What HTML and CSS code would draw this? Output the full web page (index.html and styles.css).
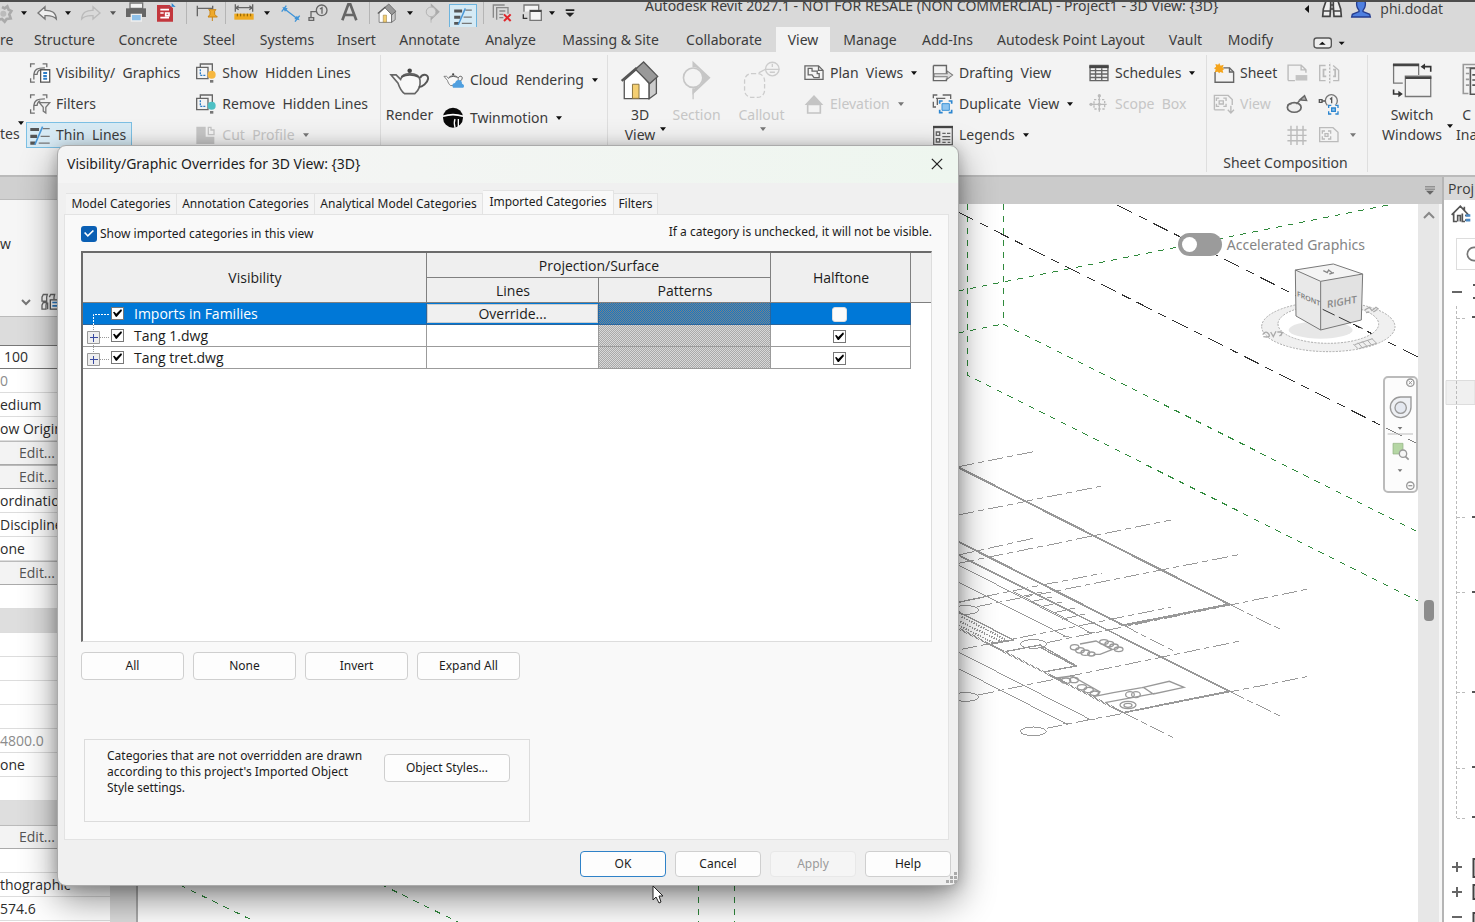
FILE: index.html
```html
<!DOCTYPE html>
<html lang="en">
<head>
<meta charset="utf-8">
<title>Autodesk Revit 2027.1 - Project1 - 3D View: {3D}</title>
<link rel="stylesheet" href="styles.css">
</head>
<body>
<svg class="defs" aria-hidden="true">
  <symbol id="caret" viewBox="0 0 8 5"><path d="M0 0h8L4 5z" fill="currentColor"/></symbol>
  <symbol id="thin" viewBox="86 370 68 60"><path d="M90 383h27M90 404h21M90 425h16" stroke="#555" stroke-width="10"/><path d="M128 380h22M122 404h28M116 425h34" stroke="#777" stroke-width="4"/><path d="M128 374l-24 56" stroke="#4a97d6" stroke-width="5"/></symbol>
  <symbol id="teapot" viewBox="1166 200 130 90"><path d="M1172 226h16l14 14c3-10 10-18 28-18 20 0 30 8 32 20 2 18-6 34-16 42h-32c-12-8-16-20-20-32z" fill="#f8f8f8" stroke="#666" stroke-width="5"/><path d="M1262 236c6-14 26-14 25 2-2 14-18 24-29 26M1204 232q26-12 54 0" fill="none" stroke="#555" stroke-width="6"/><circle cx="1230" cy="213" r="7" fill="#444"/></symbol>
  <symbol id="brackets" viewBox="0 0 68 68"><path d="M5 16V6h13M42 6h13v10M5 50v12h13M15 54V38c2-14 8-20 34-20M15 38h10q1-12 10-14" fill="none" stroke="#707070" stroke-width="4"/></symbol>
  <symbol id="home" viewBox="748 178 120 122"><path d="M760 240l38-34 38 44v46h-76z" fill="#fff" stroke="#555" stroke-width="4"/><path d="M836 250l22-20v50l-22 16z" fill="#ccc" stroke="#555" stroke-width="4"/><path d="M794 206l25-22 43 44-24 22z" fill="#999" stroke="#555" stroke-width="4"/><path d="M752 242l46-40" stroke="#555" stroke-width="7"/><path d="M785 252h20v43h-20z" fill="#f4cf72" stroke="#8b7440" stroke-width="3"/></symbol>
  <symbol id="sec" viewBox="920 178 120 124"><circle cx="968" cy="233" r="30" fill="none" stroke="currentColor" stroke-width="5"/><path d="M966 180l56 53-56 53v-20a33 33 0 0 0 0-66z" fill="currentColor"/><path d="M968 266v34" stroke="currentColor" stroke-width="4"/></symbol>
  <symbol id="windows" viewBox="630 186 126 112"><path d="M664 252h-29v-60h79v34M714 230h38v64h-80v-64z" fill="none" stroke="#777" stroke-width="4"/><path d="M633 195h82M672 235h82" stroke="#444" stroke-width="8"/><path d="M752 216v-16h-24M635 272v14h22" fill="none" stroke="#333" stroke-width="5"/><path d="M720 200l14-10v20zM664 286l-14-10v20z" fill="#333"/></symbol>
</svg>

<header class="titlebar">
  <nav class="quick" aria-label="Quick access">
    <button aria-label="Settings"><svg class="q14" viewBox="0 0 42 60"><path d="M6 12l8 4 8-6 4 10 8 4-6 10 4 12-12 2-6 8-8-8-10 2" fill="none" stroke="#aaa" stroke-width="8"/><circle cx="10" cy="32" r="9" fill="#bbb"/></svg></button>
    <button aria-label="More"><svg class="caret"><use href="#caret"/></svg></button>
    <button aria-label="Undo"><svg class="q20" viewBox="0 0 60 54"><path d="M3 27L24 8v11c18-1 33 6 34 26-8-9-18-11-34-10v10z" fill="#eee" stroke="#777" stroke-width="4"/></svg></button>
    <button aria-label="Undo list"><svg class="caret"><use href="#caret"/></svg></button>
    <button aria-label="Redo"><svg class="q20" viewBox="0 0 60 54"><path d="M57 27L36 8v11C18 18 3 25 2 45c8-9 18-11 34-10v10z" fill="none" stroke="#bbb" stroke-width="4"/></svg></button>
    <button aria-label="Redo list"><svg class="caret grey"><use href="#caret"/></svg></button>
    <button aria-label="Print"><svg class="q20" viewBox="0 0 60 60"><path d="M12 0h38v16H12z" fill="#f4f4f4" stroke="#777" stroke-width="4"/><path d="M0 16h60v26H0z" fill="#666"/><path d="M16 34h30v20H16z" fill="#8fc1ea" stroke="#eee" stroke-width="4"/></svg></button>
    <button aria-label="Export PDF"><svg class="q20" viewBox="0 0 60 60"><path d="M6 6h38l10 10v40H6z" fill="#c3373d"/><path d="M16 20h26M16 30h10M16 44h26M32 30v8h10v-8z" stroke="#fff" stroke-width="5" fill="none"/><path d="M34 10h16V0l12 12" fill="#2d86d0"/></svg></button>
    <i class="sep"></i>
    <button aria-label="Activate dimensions"><svg class="q20" viewBox="0 0 60 60"><path d="M4 8v32M4 16h46v-8" fill="none" stroke="#666" stroke-width="4"/><path d="M38 20h22l-4 4v10l8 8H36l6-8V24zM49 42v12" fill="#efaa2c" stroke="#c98516" stroke-width="3"/></svg></button>
    <i class="sep"></i>
    <button aria-label="Measure"><svg class="q20" viewBox="0 0 60 60"><path d="M4 4v22M56 4v22M4 14h52M14 8L6 14l8 6M46 8l8 6-8 6" fill="none" stroke="#666" stroke-width="4"/><path d="M1 32h58v18H1z" fill="#efaa20"/><path d="M10 32v8M20 32v8M30 32v8M40 32v8M50 32v8" stroke="#875c00" stroke-width="3"/></svg></button>
    <button aria-label="Measure list"><svg class="caret"><use href="#caret"/></svg></button>
    <button aria-label="Aligned dimension"><svg class="q20" viewBox="0 0 60 60"><path d="M8 16l42 32M2 26L16 8M42 56l14-18" fill="none" stroke="#3f94d8" stroke-width="4"/><path d="M4 12l16 4-8 10zM56 52l-16-4 8-10z" fill="#3f94d8"/></svg></button>
    <button aria-label="Tag"><svg class="q20" viewBox="0 0 60 60"><circle cx="38" cy="22" r="16" fill="none" stroke="#666" stroke-width="4"/><path d="M33 18l6-4v18M22 26H6v20M0 44h14v8H0z" fill="none" stroke="#666" stroke-width="4"/></svg></button>
    <button aria-label="Text"><svg class="q20" viewBox="0 0 60 60"><path d="M10 52L28 4h6l18 48M17 36h28" fill="none" stroke="#666" stroke-width="8"/></svg></button>
    <i class="sep"></i>
    <button aria-label="Default 3D view"><svg class="q20"><use href="#home"/></svg></button>
    <button aria-label="3D list"><svg class="caret"><use href="#caret"/></svg></button>
    <button aria-label="Section" class="light"><svg class="q20"><use href="#sec"/></svg></button>
    <button aria-label="Thin lines" class="lit"><svg class="q20"><use href="#thin"/></svg></button>
    <i class="sep"></i>
    <button aria-label="Close inactive"><svg class="q20" viewBox="0 0 60 60"><path d="M4 44V6h34M14 50V14h34v18M22 24h18M22 34h12M22 44h12" fill="none" stroke="#888" stroke-width="4"/><path d="M36 34l20 20M56 34L36 54" stroke="#e0262b" stroke-width="6"/></svg></button>
    <button aria-label="Switch windows"><svg class="q20" viewBox="0 0 60 60"><path d="M6 26V6h44v16M24 22h34v30H24z" fill="#f4f4f4" stroke="#777" stroke-width="4"/><path d="M24 24h34" stroke="#444" stroke-width="6"/><path d="M4 34v12h12" fill="none" stroke="#333" stroke-width="4"/></svg></button>
    <button aria-label="Switch list"><svg class="caret"><use href="#caret"/></svg></button>
    <button aria-label="Customize"><svg class="q10" viewBox="0 0 30 30"><path d="M2 4h26v5H2zM2 14h26L15 27z" fill="#222"/></svg></button>
  </nav>
  <h1>Autodesk Revit 2027.1 - NOT FOR RESALE (NON COMMERCIAL) - Project1 - 3D View: {3D}</h1>
  <div class="account">
    <svg class="q10" viewBox="0 0 30 30"><path d="M5 15L18 3v24z" fill="#111"/></svg>
    <svg class="q20" viewBox="0 0 60 60"><path d="M12 6h14v16l-2 30H2l2-22zM34 6h14l8 24 2 22H36l-2-30zM26 18h8v12h-8zM4 36h20M36 36h20" fill="#eee" stroke="#444" stroke-width="5"/></svg>
    <svg class="q20" viewBox="0 0 60 60"><path d="M20 4h20q6 8 1 22l-5 8v4l20 8 2 8H2l2-8 20-8v-4l-5-8Q14 12 20 4z" fill="#4e7fe0" stroke="#253c8e" stroke-width="4"/></svg>
    <a href="#">phi.dodat</a>
  </div>
</header>

<nav class="tabs" aria-label="Ribbon tabs">
  <a href="#" class="first">re</a><a href="#">Structure</a><a href="#">Concrete</a><a href="#">Steel</a><a href="#">Systems</a><a href="#">Insert</a><a href="#">Annotate</a><a href="#">Analyze</a><a href="#">Massing &amp; Site</a><a href="#">Collaborate</a><a href="#" class="on">View</a><a href="#">Manage</a><a href="#">Add-Ins</a><a href="#">Autodesk Point Layout</a><a href="#">Vault</a><a href="#">Modify</a>
  <button class="collapse" aria-label="Minimize ribbon"><svg viewBox="0 0 96 36"><rect x="3" y="3" width="52" height="30" rx="8" fill="#eee" stroke="#555" stroke-width="4"/><path d="M18 23h20l-10-9z" fill="#111"/><path d="M77 14h18l-9 10z" fill="#111"/></svg></button>
</nav>

<section class="ribbon" aria-label="View ribbon">
  <div class="panel p1">
    <div class="cut"><svg class="caret"><use href="#caret"/></svg><span>tes</span></div>
    <div class="rows">
      <button><svg class="ic" viewBox="0 0 68 68"><use href="#brackets" width="68" height="68"/><path d="M36 24h28v38H36z" fill="#fff" stroke="#555" stroke-width="4"/><path d="M44 34h12M44 52h12M47 46v-3h8" stroke="#2d7dc8" stroke-width="6"/></svg>Visibility/&nbsp; Graphics</button>
      <button><svg class="ic" viewBox="0 0 68 68"><use href="#brackets" width="68" height="68"/><path d="M32 30h32L52 44v18l-8-6V44z" fill="#eee" stroke="#777" stroke-width="4"/></svg>Filters</button>
      <button class="lit"><svg class="ic"><use href="#thin"/></svg>Thin&nbsp; Lines</button>
    </div>
    <div class="rows">
      <button><svg class="ic" viewBox="582 182 66 66"><path d="M598 198v-10h36v24M587 198h34v34h-34zM634 224h-12" fill="none" stroke="#666" stroke-width="4"/><path d="M598 204v18h18" fill="none" stroke="#2d7dc8" stroke-width="4" stroke-dasharray="6 3"/><circle cx="632" cy="220" r="12" fill="#f6b73f"/><path d="M627 236h10v8h-10z" fill="#777"/></svg>Show&nbsp; Hidden Lines</button>
      <button><svg class="ic" viewBox="582 182 66 66"><path d="M598 198v-10h36v24M587 198h34v34h-34zM634 224h-12" fill="none" stroke="#666" stroke-width="4"/><path d="M598 204v18h18" fill="none" stroke="#2d7dc8" stroke-width="4" stroke-dasharray="6 3"/><circle cx="632" cy="220" r="12" fill="#4dc0c4"/><path d="M627 236h10v8h-10z" fill="#777"/></svg>Remove&nbsp; Hidden Lines</button>
      <button disabled><svg class="ic" viewBox="584 368 66 62"><path d="M588 374h28v30h26v22h-54z" fill="#c6c6c6"/><path d="M624 376h8v8h9v14h-17z" fill="none" stroke="#c6c6c6" stroke-width="4"/></svg>Cut&nbsp; Profile <svg class="caret dim"><use href="#caret"/></svg></button>
    </div>
  </div>

  <div class="panel p2">
    <button class="big"><svg class="pot"><use href="#teapot"/></svg><span>Render</span></button>
    <div class="rows tall">
      <button><svg class="ic" viewBox="0 0 66 66"><use href="#teapot" y="8" width="62" height="46"/><path d="M30 56q-6-12 6-14 4-12 16-8 6 4 5 10 10 4 4 12z" fill="#4f9fdf"/></svg>Cloud&nbsp; Rendering <svg class="caret"><use href="#caret"/></svg></button>
      <button><svg class="ic" viewBox="0 0 66 66"><circle cx="30" cy="32" r="30" fill="#0a0a0a"/><path d="M0 28q30-10 60 0" fill="none" stroke="#fff" stroke-width="5"/><path d="M36 62q-4-16 0-26M46 36v24" fill="none" stroke="#fff" stroke-width="4"/></svg>Twinmotion <svg class="caret"><use href="#caret"/></svg></button>
    </div>
  </div>

  <div class="panel p3">
    <button class="big wide"><svg class="icon40"><use href="#home"/></svg><span>3D<br>View</span><svg class="caret corner"><use href="#caret"/></svg></button>
    <button class="big" disabled><svg class="icon40"><use href="#sec"/></svg><span>Section</span></button>
    <button class="big" disabled><svg class="icon40" viewBox="1116 178 124 124"><rect x="1124" y="220" width="62" height="74" rx="22" fill="none" stroke="#ccc" stroke-width="4" stroke-dasharray="14 7"/><circle cx="1210" cy="206" r="21" fill="none" stroke="#ccc" stroke-width="4"/><path d="M1168 218l20-11h44M1210 190v10M1202 216h16" fill="none" stroke="#ccc" stroke-width="4"/></svg><span>Callout</span><svg class="caret dim"><use href="#caret"/></svg></button>
    <div class="rows plan">
      <button><svg class="ic" viewBox="38 184 68 60"><path d="M44 192h42l14 14v28H44z" fill="none" stroke="#666" stroke-width="4"/><path d="M86 192v14h14M54 200h12v8h16v8h6v12H72l-6-8H54z" fill="none" stroke="#666" stroke-width="4"/></svg>Plan&nbsp; Views <svg class="caret"><use href="#caret"/></svg></button>
      <button disabled><svg class="ic" viewBox="40 276 64 66"><path d="M44 312l28-30 28 30z" fill="#c4c4c4"/><path d="M53 310h38v26H53z" fill="#f3f3f3" stroke="#c4c4c4" stroke-width="5"/></svg>Elevation <svg class="caret dim"><use href="#caret"/></svg></button>
    </div>
    <div class="rows draft">
      <button><svg class="ic" viewBox="424 184 64 60"><path d="M428 192h38v24M466 230v6h-38v-44" fill="none" stroke="#666" stroke-width="4"/><path d="M430 216h38v-8l16 12-16 12v-7h-38z" fill="#ddd" stroke="#777" stroke-width="3"/></svg>Drafting&nbsp; View</button>
      <button><svg class="ic" viewBox="424 274 66 66"><path d="M428 290v-10h12M456 280h24v12M436 316h-8v-16M440 288v22M436 290h28" fill="none" stroke="#666" stroke-width="4"/><path d="M454 306h22v20h-22z" fill="#8ec5f0" stroke="#3d93d6" stroke-width="3"/><path d="M447 306v-8h9M474 298h9v8M483 324v9h-9M456 333h-9v-9" fill="none" stroke="#2d86d0" stroke-width="5"/></svg>Duplicate&nbsp; View <svg class="caret"><use href="#caret"/></svg></button>
      <button><svg class="ic" viewBox="424 366 64 66"><path d="M428 374h56v54h-56z" fill="#eee" stroke="#666" stroke-width="4"/><path d="M426 375h60" stroke="#444" stroke-width="7"/><path d="M436 390h10v10h-10zM436 410h10v10h-10zM454 394h10M468 394h10M454 404h24M454 413h24M454 421h10M470 421h8" fill="none" stroke="#666" stroke-width="4"/></svg>Legends <svg class="caret"><use href="#caret"/></svg></button>
    </div>
    <div class="rows sched">
      <button><svg class="ic" viewBox="890 184 64 60"><path d="M896 192h52v44h-52zM896 207h52M896 217h52M896 227h52M912 200v36M930 200v36" fill="none" stroke="#666" stroke-width="4"/><path d="M894 196h56" stroke="#444" stroke-width="8"/></svg>Schedules <svg class="caret"><use href="#caret"/></svg></button>
      <button disabled><svg class="ic" viewBox="890 276 66 66"><path d="M900 310h46M924 286v46" stroke="#bbb" stroke-width="4"/><path d="M908 296h32v28h-32z" fill="none" stroke="#bbb" stroke-width="4" stroke-dasharray="7 5"/><circle cx="924" cy="284" r="5" fill="#bbb"/><circle cx="899" cy="310" r="5" fill="#bbb"/><circle cx="924" cy="310" r="5" fill="#bbb"/></svg>Scope&nbsp; Box</button>
    </div>
  </div>

  <div class="panel p4">
    <div class="sheet">
      <div class="rows">
        <button><svg class="ic" viewBox="98 186 64 62"><path d="M104 214v30h54v-30l-12-12h-18" fill="none" stroke="#666" stroke-width="4"/><path d="M146 202v12h12" fill="none" stroke="#666" stroke-width="4"/><path d="M116 188l4 8 9-3-3 9 5 3-5 4 2 8-9-3-3 4-4-5-9 2 3-8-5-4 6-4-2-8 8 2z" fill="#f5a51c"/></svg>Sheet</button>
        <button disabled><svg class="ic" viewBox="98 276 64 62"><path d="M102 324v-42h40l12 12v16M102 324h30" fill="none" stroke="#bbb" stroke-width="4"/><path d="M108 298v-8h8M128 290h8v8M136 306v8h-8M116 314h-8v-8M116 298h12v9h-12zM150 312v20M141 324l9 9 9-9" fill="none" stroke="#bbb" stroke-width="4"/></svg>View</button>
      </div>
      <div class="mini">
        <button disabled aria-label="Title block"><svg class="ic" viewBox="322 186 64 60"><path d="M328 238v-45h38l14 14v8M328 238h20M366 193v14h14" fill="none" stroke="#bbb" stroke-width="4"/><path d="M350 222h34v16h-34z" fill="#c4c4c4"/></svg></button>
        <button disabled aria-label="Matchline"><svg class="ic" viewBox="418 184 64 64"><path d="M440 194h-17v44h17M462 194l16 14v30h-16M452 186v60" fill="none" stroke="#bbb" stroke-width="4"/><path d="M452 186v60" stroke="#f3f3f3" stroke-width="5" stroke-dasharray="4 6"/><path d="M442 206h-8v20h8M462 206h6v20h-6" fill="none" stroke="#bbb" stroke-width="5"/></svg></button><i></i>
        <button aria-label="Revisions"><svg class="ic" viewBox="322 276 64 64"><ellipse cx="346" cy="318" rx="20" ry="14" fill="#eee" stroke="#666" stroke-width="5"/><path d="M326 312q6-6 12-4M352 308l16-16M362 296l14-12 6 14z" fill="#aaa" stroke="#666" stroke-width="4"/></svg></button>
        <button aria-label="Guide"><svg class="ic" viewBox="418 276 66 64"><circle cx="458" cy="298" r="18" fill="none" stroke="#777" stroke-width="4"/><path d="M454 294l5-4v16M440 299h-12M422 295h8v8h-8z" fill="none" stroke="#555" stroke-width="4"/><path d="M446 310h36v30h-36z" fill="#f3f3f3"/><path d="M450 320v-8h8M470 312h8v8M478 330v8h-8M458 338h-8v-8" fill="none" stroke="#2d86d0" stroke-width="4"/><path d="M459 320h11v10h-11z" fill="#8ec5f0" stroke="#2d86d0" stroke-width="4"/></svg></button><i></i>
        <button disabled aria-label="Guide grid"><svg class="ic" viewBox="322 370 62 60"><path d="M336 374v54M353 374v54M370 374v54M326 386h54M326 401h54M326 416h54" stroke="#bbb" stroke-width="4"/></svg></button>
        <button disabled aria-label="Viewports"><svg class="ic" viewBox="418 370 66 60"><path d="M423 378h40l15 14v28h-55z" fill="none" stroke="#bbb" stroke-width="4"/><path d="M431 396v-8h8M448 388h8v8M456 404v8h-8M439 412h-8v-8M439 396h9v8h-9z" fill="none" stroke="#bbb" stroke-width="4"/></svg></button>
        <svg class="caret dim"><use href="#caret"/></svg>
      </div>
    </div>
    <div class="plabel">Sheet Composition</div>
  </div>

  <div class="panel p5">
    <button class="big"><svg class="icon40"><use href="#windows"/></svg><span>Switch<br>Windows</span><svg class="caret corner"><use href="#caret"/></svg></button>
    <button class="big edge"><svg class="icon40" viewBox="848 186 124 112"><path d="M868 284h-16v-90h50M860 204h30M860 222h10M860 240h10M860 258h10" fill="none" stroke="#999" stroke-width="5"/><path d="M874 206h90v80h-90zM880 226h16M880 242h16M880 258h16" fill="none" stroke="#555" stroke-width="5"/></svg><span>C<br>Ina</span></button>
  </div>
</section>

<main class="work">
  <aside class="props" aria-label="Properties">
    <div class="phead"></div>
    <div class="ptype"><span>w</span><div class="pick"><svg class="chev" viewBox="0 0 10 6"><path d="M1 1l4 4 4-4" fill="none" stroke="#777" stroke-width="2"/></svg><svg class="etype" viewBox="0 0 60 50"><path d="M3 12l4-8h12l-2 8v12H3zM25 12l4-8h12l-2 8v6M3 36l4-8h10l-2 8v12H3zM20 48v-20" fill="none" stroke="#666" stroke-width="4"/><path d="M28 20h26v28H28z" fill="#fff" stroke="#555" stroke-width="4"/><path d="M34 28h14M34 38h14" stroke="#2d7dc8" stroke-width="5"/></svg></div></div>
    <div class="pband"></div>
    <div class="pscroll">
    <ul class="plist">
      <li class="scale">100</li><li class="faint">0</li><li>edium</li><li>ow Origin</li><li class="edit"><button>Edit...</button></li><li class="edit"><button>Edit...</button></li><li>ordination</li><li>Discipline</li><li>one</li><li class="edit"><button>Edit...</button></li><li></li><li class="cat"></li><li></li><li></li><li></li><li></li><li class="faint">4800.0</li><li>one</li><li></li><li class="cat"></li><li class="edit"><button>Edit...</button></li><li></li><li>thographic</li><li>574.6</li>
    </ul><div class="pbar"></div></div>
  </aside>

  <section class="doc" aria-label="3D view">
    <div class="dochead"><svg viewBox="0 0 30 26"><path d="M0 2h30M0 9h30" stroke="#777" stroke-width="3"/><path d="M3 14h24L15 26z" fill="#666"/></svg></div>
    <div class="canvas">
      <svg class="scene" viewBox="138 204 1280 718" preserveAspectRatio="xMinYMin slice" shape-rendering="crispEdges">
        <g fill="none" stroke="#2f8a3c" stroke-width="1" stroke-dasharray="6 6">
          <path d="M967 204v171l451 226M1003 204v120l415 208M958 291l115-23 315-63M958 333l45-9M180 885l82 40M370 879l92 45M698 885v37M734 885v37"/>
        </g>
        <path d="M1117 205l301 152M958 212l460 232" fill="none" stroke="#333" stroke-dasharray="17 7 9 7"/>
        <g transform="translate(950 440) scale(.3333)" fill="none" stroke="#999" stroke-width="3">
          <path stroke-width="6" d="M25 82L838 493L520 556L25 305"/>
          <path stroke-width="5" d="M25 345L838 754L520 818"/>
          <path stroke-width="6" stroke-dasharray="3 1" d="M25 565L520 818"/>
          <path stroke-dasharray="48 12 18 12" d="M25 80L250 35M25 225L455 138M25 370L662 240M25 345L250 295M80 500L866 344M100 470L455 400M290 608L1070 448M35 628L662 502M85 765L866 604M290 865L1070 710M838 493L995 570M520 556L675 635M838 754L995 830M520 818L675 896"/>
          <path d="M25 375L420 577M25 426L350 590M25 636L420 838M25 686L350 852M340 590h18M410 577h25M340 852h18M410 838h25"/>
          <path d="M25 487l95-20M25 515L190 600L110 615M165 635L270 615L380 678L285 695M270 622l110 58" stroke-width="4"/>
          <path d="M35 530l130 68M30 545l125 60M25 556l110 54" stroke-width="6" stroke-dasharray="4 4"/>
          <ellipse cx="250" cy="612" rx="39" ry="13"/><ellipse cx="250" cy="874" rx="39" ry="13"/><ellipse cx="46" cy="771" rx="39" ry="13"/><ellipse cx="46" cy="510" rx="39" ry="13"/>
          <g shape-rendering="auto" stroke-width="4">
            <path d="M390 612l48-9 48 26-36 14h-20"/>
            <ellipse cx="374" cy="622" rx="13" ry="8"/><ellipse cx="390" cy="631" rx="13" ry="8"/><ellipse cx="406" cy="638" rx="13" ry="8"/><ellipse cx="424" cy="642" rx="11" ry="6"/>
            <ellipse cx="462" cy="606" rx="13" ry="7"/><ellipse cx="478" cy="612" rx="13" ry="8"/><ellipse cx="492" cy="620" rx="13" ry="8"/><ellipse cx="506" cy="628" rx="13" ry="7"/>
            <path d="M580 742l78-18 44 18-92 20zM465 788l150-28M430 770l60-12 90-16"/>
            <path d="M320 714l45-6 85 48-10 10"/>
            <ellipse cx="348" cy="722" rx="14" ry="8"/><ellipse cx="372" cy="720" rx="13" ry="8"/><ellipse cx="396" cy="742" rx="14" ry="8"/><ellipse cx="416" cy="750" rx="14" ry="8"/><ellipse cx="434" cy="760" rx="13" ry="7"/>
            <ellipse cx="534" cy="795" rx="24" ry="11"/><ellipse cx="534" cy="796" rx="12" ry="6"/><ellipse cx="540" cy="764" rx="13" ry="9"/><ellipse cx="558" cy="764" rx="13" ry="9"/>
          </g>
          <path d="M190 455L355 540M215 470l60-14M245 485l60-14M275 500l60-14M305 520l70-16M335 538l70-16" stroke-width="3"/>
        </g>
        <g transform="translate(1160 200) scale(.3333)" shape-rendering="auto">
          <ellipse cx="482" cy="390" rx="96" ry="26" fill="#ddd" opacity=".7"/>
          <path fill-rule="evenodd" d="M305 380a200 75 0 1 0 400 0a200 75 0 1 0-400 0zM354 372a151 58 0 1 0 302 0a151 58 0 1 0-302 0z" fill="#f0f0f0" stroke="#aaa" stroke-width="3" stroke-dasharray="6 4"/>
          <path d="M406 210l114-18 88 30-126 22z" fill="#f4f4f4"/><path d="M406 210l76 34v146l-74-42z" fill="#e9e9e9"/><path d="M482 244l126-22-4 138-122 30z" fill="#e2e2e2"/>
          <path d="M406 210l114-18 88 30-126 22zl2 138 74 42V244M482 390l122-30 4-138" fill="none" stroke="#777" stroke-width="3"/>
          <path d="M490 212l12 6 4-8 10 8M508 222l14-4" fill="none" stroke="#888" stroke-width="4"/>
          <path d="M488 328l120 58" fill="none" stroke="#333" stroke-width="3" stroke-dasharray="40 14"/>
          <path d="M308 404q10-14 18-2t-16 8M332 396l8 14 8-16M352 396h10q8 6-4 12M368 396l-6 12M614 330l14-8 8 10 12-10 8 6M618 338l10-2M640 336l10-6" fill="none" stroke="#aaa" stroke-width="4"/>
          <path d="M580 432l14 14M594 428l12 14M606 424l14 14M622 420l12 14M636 416l14 14M584 434l54-18M596 446l54-16" fill="none" stroke="#aaa" stroke-width="3"/>
        </g>
        <text class="cube" transform="translate(1327 308) skewY(-10)">RIGHT</text>
        <text class="cube sm" transform="translate(1297 296) skewY(24)">FRONT</text>
      </svg>
      <label class="accel"><input type="checkbox" role="switch">Accelerated Graphics</label>
      <div class="navbar">
        <svg viewBox="0 0 105 351"><circle cx="82" cy="20" r="11" fill="none" stroke="#999" stroke-width="4"/><path d="M77 15l10 10M87 15L77 25" stroke="#999" stroke-width="3"/><path d="M22 94a31 31 0 0 1 31-31h31v31a31 31 0 0 1-62 0z" fill="#eef0f4" stroke="#999" stroke-width="4"/><circle cx="53" cy="95" r="17" fill="#e4e8f0" stroke="#999" stroke-width="4"/><path d="M44 153h14l-7 8zM44 280h14l-7 8z" fill="#777"/><path d="M14 174h76" stroke="#bbb" stroke-width="3"/><path d="M30 202h30v32H30z" fill="#b5d6a4" stroke="#8fb080" stroke-width="2"/><circle cx="60" cy="233" r="11" fill="#f6f6f6" stroke="#999" stroke-width="4"/><path d="M67 241l10 10" stroke="#999" stroke-width="5"/><circle cx="82" cy="329" r="11" fill="none" stroke="#999" stroke-width="4"/><path d="M76 329h12" stroke="#999" stroke-width="4"/></svg>
      </div>
      <div class="vbar"><svg viewBox="0 0 14 8"><path d="M2 7l5-5 5 5" fill="none" stroke="#888" stroke-width="2"/></svg><div class="thumb"></div></div>
    </div>
  </section>

  <aside class="browser" aria-label="Project browser">
    <div class="bhead">Proj</div>
    <svg class="bhome" viewBox="0 0 60 56"><path d="M2 32L28 6l26 28M8 28v24h10M40 8v10M20 52V34h8v18M34 28v24h8M42 34h10M42 48h10" fill="none" stroke="#555" stroke-width="5"/><path d="M44 30h14v8H44zM44 44h14v8H44z" fill="#4c89c4"/></svg>
    <div class="bsearch"><svg viewBox="0 0 48 48"><circle cx="24" cy="24" r="20" fill="none" stroke="#777" stroke-width="5"/></svg></div>
    <svg class="tree" viewBox="1444 275 31 647" preserveAspectRatio="xMinYMin slice"><path d="M1446 380.500h29v24h-29z" fill="#f0f0f0" stroke="#ddd"/><path d="M1456.500 306v512M1457 318.500h10M1457 517.500h10M1457 592.500h10M1457 692.500h10M1457 768.500h10M1457 818.500h10" fill="none" stroke="#bbb" stroke-dasharray="3 2"/><path d="M1452 292h10M1452 867h10M1457 862v10M1452 892h10M1457 887v10M1452 917h10" stroke="#666" stroke-width="2"/><path d="M1472 317h3M1472 517h3M1472 592h3M1472 692h3M1472 767h3M1472 817h3M1473 285h2M1473 298h2" stroke="#555" stroke-width="2"/><path d="M1475 859h-1.500v18h1.500M1475 885h-1.500v14h1.500M1475 913h-1.500v9" fill="none" stroke="#444" stroke-width="2"/></svg>
  </aside>
</main>

<div class="dialog" role="dialog" aria-labelledby="dt">
  <div class="dtitle"><h2 id="dt">Visibility/Graphic Overrides for 3D View: {3D}</h2><button aria-label="Close"><svg viewBox="0 0 14 14"><path d="M1 1l12 12M13 1L1 13" stroke="#222" stroke-width="1.500"/></svg></button></div>
  <div class="dtabs" role="tablist"><button role="tab">Model Categories</button><button role="tab">Annotation Categories</button><button role="tab">Analytical Model Categories</button><button role="tab" class="on" aria-selected="true">Imported Categories</button><button role="tab">Filters</button></div>
  <div class="page">
    <div class="showrow"><label><input type="checkbox" class="blue" checked>Show imported categories in this view</label><p>If a category is unchecked, it will not be visible.</p></div>
    <div class="grid">
      <table>
        <colgroup><col class="c1"><col class="c2"><col class="c3"><col class="c4"><col></colgroup>
        <thead>
          <tr><th rowspan="2">Visibility</th><th colspan="2">Projection/Surface</th><th rowspan="2">Halftone</th><th rowspan="2" class="stub"></th></tr>
          <tr><th>Lines</th><th>Patterns</th></tr>
        </thead>
        <tbody>
          <tr class="sel"><td><div class="name"><svg viewBox="0 0 28 22"><path d="M10.500 22V11.500H26" fill="none" stroke="#fff" stroke-dasharray="2 1"/></svg><input type="checkbox" id="r1" class="tick" checked><label for="r1">Imports in Families</label></div></td><td class="ov"><button>Override...</button></td><td class="hatch"></td><td class="mid"><input type="checkbox" class="soft" aria-label="Halftone imports"></td><td class="stub"></td></tr>
          <tr><td><div class="name"><svg viewBox="0 0 28 22"><path d="M10.500 0v22M17 12.500h9" stroke="#999" stroke-dasharray="1 1"/><path d="M4.500 6.500h12v12h-12z" fill="#eee" stroke="#999"/><path d="M7 12.500h8M10.500 9v8" stroke="#3a4aa0"/></svg><input type="checkbox" id="r2" class="tick" checked><label for="r2">Tang 1.dwg</label></div></td><td></td><td class="hatch"></td><td class="mid"><input type="checkbox" class="tick" checked aria-label="Halftone Tang 1.dwg"></td><td class="stub"></td></tr>
          <tr><td><div class="name"><svg viewBox="0 0 28 22"><path d="M10.500 0v7M17 12.500h9" stroke="#999" stroke-dasharray="1 1"/><path d="M4.500 6.500h12v12h-12z" fill="#eee" stroke="#999"/><path d="M7 12.500h8M10.500 9v8" stroke="#3a4aa0"/></svg><input type="checkbox" id="r3" class="tick" checked><label for="r3">Tang tret.dwg</label></div></td><td></td><td class="hatch"></td><td class="mid"><input type="checkbox" class="tick" checked aria-label="Halftone Tang tret.dwg"></td><td class="stub"></td></tr>
        </tbody>
      </table>
    </div>
    <div class="acts"><button class="btn">All</button><button class="btn">None</button><button class="btn">Invert</button><button class="btn">Expand All</button></div>
    <div class="note"><p>Categories that are not overridden are drawn according to this project's Imported Object Style settings.</p><button class="btn">Object Styles...</button></div>
  </div>
  <div class="foot"><button class="btn ok">OK</button><button class="btn">Cancel</button><button class="btn" disabled>Apply</button><button class="btn">Help</button></div>
  <svg class="grip" viewBox="0 0 12 12"><path d="M8 0h3v3H8zM4 4h3v3H4zM8 4h3v3H8zM0 8h3v3H0zM4 8h3v3H4zM8 8h3v3H8z" fill="#aaa"/></svg>
</div>
<svg class="cursor" viewBox="0 0 12 19"><path d="M1 1v14l3-3 3 6 2-1-2-6h4z" fill="#fff" stroke="#222"/></svg>
</body>
</html>
```
FILE: styles.css
```css
* { box-sizing: border-box; }
html, body { height: 100%; }
body {
  margin: 0;
  display: flex;
  flex-direction: column;
  overflow: hidden;
  position: relative;
  background: #f3f3f3;
  color: #3c3c3c;
  font: 14px/18px "Noto Sans", "Open Sans", sans-serif;
}
button { font: inherit; color: inherit; background: none; border: 0; padding: 0; margin: 0; white-space: nowrap; }
a { color: inherit; text-decoration: none; }
svg { display: block; flex: none; overflow: visible; }
.defs { position: absolute; width: 0; height: 0; overflow: hidden; }
.caret { width: 6px; height: 4px; color: #111; }
.caret.grey { color: #555; }
.caret.dim { color: #777; }

/* title bar */
.titlebar {
  flex: none;
  display: flex;
  align-items: flex-start;
  height: 27px;
  border-top: 2px solid #4d4d4d;
  background: #d9d9d9;
  overflow: hidden;
}
.quick {
  display: grid;
  grid-template-columns: 14px 20px 26px 16px 30px 14px 32px 26px 16px 24px 14px 24px 22px 26px 30px 30px 10px 26px 20px 26px 34px 6px 32px 28px 12px 24px;
  height: 14px;
  align-items: center;
  justify-items: center;
  flex: none;
}
.quick button { display: flex; align-items: center; justify-content: center; height: 14px; }
.quick .lit { width: 28px; height: 24px; align-self: end; margin-bottom: -4px; border: 1px solid #6db4de; background: #d5eaf5; }
.quick .light { color: #aaa; }
.q20 { width: 20px; height: 20px; }
.q14 { width: 14px; height: 20px; }
.q10 { width: 10px; height: 10px; }
.sep { width: 1px; height: 22px; background: #b5b5b5; }
.titlebar h1 { margin: 0 0 0 63px; font-size: 14px; font-weight: 400; line-height: 8px; white-space: nowrap; flex: 1; }
.account { display: flex; align-items: center; height: 14px; gap: 9px; padding-right: 32px; font-family: "Open Sans", sans-serif; }

/* ribbon tabs */
.tabs {
  flex: none;
  display: grid;
  grid-template-columns: 23px 83px 84px 58px 78px 61px 85px 77px 123px 104px 54px 80px 75px 172px 57px 73px auto;
  height: 25px;
  background: #d9d9d9;
}
.tabs a { text-align: center; line-height: 25px; white-space: nowrap; }
.tabs .first { text-align: left; }
.tabs .on { background: #f3f3f3; }
.collapse { padding: 7px 0 0 26px; text-align: left; }
.collapse svg { width: 32px; height: 12px; }

/* ribbon */
.ribbon {
  flex: none;
  display: flex;
  height: 125px;
  padding: 3px 0;
  border-bottom: 2px solid #bababa;
  overflow: hidden;
  background: #f3f3f3;
}
.panel { flex: none; display: flex; border-right: 1px solid #dedede; }
.p1 { width: 381px; }
.p2 { width: 227px; }
.p3 { width: 599px; }
.p4 { width: 161px; flex-direction: column; }
.p5 { flex: 1 1 auto; border: 0; }
.ribbon button { display: flex; align-items: center; gap: 5px; }
.ribbon button:disabled { color: #c6c6c6; }
.ic { width: 22px; height: 22px; }
.ribbon button .caret:last-child { margin-left: 3px; }
.cut { width: 26px; display: flex; flex-direction: column; padding-top: 66px; }
.cut .caret { align-self: flex-end; margin-right: 2px; }
.rows { display: grid; grid-template-rows: repeat(3, 31px); align-items: center; justify-items: start; padding-top: 2px; align-content: start; }
.rows button { height: 26px; }
.p1 .rows button { border: 1px solid transparent; padding: 0 5px 0 2px; }
.p1 .rows .lit { border-color: #7cc0e4; background: #d8ebf5; }
.p1 .rows + .rows { padding-left: 6px; }
.rows.tall { grid-template-rows: 38px 38px; padding-top: 6px; padding-left: 5px; }
.ribbon .big { flex-direction: column; gap: 0; position: relative; align-self: flex-start; padding-top: 5px; width: 65px; }
.big span { line-height: 20px; margin-top: 5px; }
.ribbon .big .caret { margin: 2px 0 0; }
.ribbon .big .corner { position: absolute; right: 6px; bottom: 14px; }
.icon40 { width: 40px; height: 40px; }
.p2 .big { width: 57px; padding-top: 11px; }
.pot { width: 42px; height: 30px; }
.p2 .big span { margin-top: 9px; }
.p3 .wide { width: 48px; margin-left: 8px; }
.ribbon .p3 .wide .corner { right: -2px; }
.plan { width: 138px; padding-left: 9px; }
.draft { width: 156px; }
.sheet { display: flex; justify-content: space-between; }
.p4 .rows { padding-left: 6px; }
.mini { display: grid; grid-template-columns: 32px 32px 10px; grid-template-rows: repeat(3, 31px); align-items: center; padding: 2px 7px 0 0; }
.plabel { text-align: center; line-height: 26px; padding-right: 3px; }
.p5 .big { width: 88px; }
.p5 .big .corner { right: 3px; bottom: 17px; }
.ribbon .p5 .edge { align-items: flex-start; width: 46px; }
.edge .icon40 { margin-left: 6px; }

/* work area */
.work { flex: 1; min-height: 0; display: flex; background: #fff; }
.props { width: 138px; flex: none; display: flex; flex-direction: column; border-right: 2px solid #aaa; overflow: hidden; font-family: "Open Sans", sans-serif; color: #2c2c2c; }
.phead { height: 23px; background: #d0d0d0; border-bottom: 1px solid #bbb; flex: none; }
.ptype { height: 117px; flex: none; display: flex; flex-direction: column; justify-content: space-between; padding: 35px 0 6px; border-bottom: 1px solid #bbb; background: #f6f6f6; width: 110px; }
.pick { display: flex; align-items: center; gap: 10px; padding-left: 21px; }
.chev { width: 10px; height: 6px; }
.etype { width: 20px; height: 17px; }
.pband { height: 28px; flex: none; background: #dcdcdc; }
.pscroll { display: flex; flex: 1; min-height: 0; }
.plist { list-style: none; margin: 0; padding: 0; width: 110px; }
.plist li { height: 24px; line-height: 23px; border-bottom: 1px solid #ddd; white-space: nowrap; overflow: hidden; }
.plist .scale { border-top: 1px solid #777; border-bottom: 1px solid #777; padding-left: 4px; line-height: 21px; }
.plist .faint { color: #8c8c8c; }
.plist .edit { background: #f3f3f3; border-top: 1px solid #bbb; border-bottom-color: #aaa; }
.edit button { display: block; padding-left: 19px; line-height: 22px; color: #555; }
.plist .cat { background: #dedede; }
.pbar { flex: 1; background: #ddd; }

.doc { flex: 1; min-width: 0; display: flex; flex-direction: column; }
.dochead { flex: none; height: 27px; background: #cbcbcb; display: flex; justify-content: flex-end; align-items: center; padding-right: 7px; }
.dochead svg { width: 10px; height: 9px; }
.canvas { flex: 1; min-height: 0; position: relative; display: flex; justify-content: flex-end; overflow: hidden; }
.scene { position: absolute; left: 0; top: 0; width: 1280px; height: 718px; }
.cube { font: 600 10px "Open Sans", sans-serif; fill: #888; }
.cube.sm { font-size: 7px; fill: #777; }
.accel { position: absolute; right: 77px; top: 29px; display: flex; align-items: center; gap: 5px; color: #858585; height: 23px; }
.accel input { appearance: none; margin: 0; width: 44px; height: 23px; border-radius: 12px; background: #9b9b9b; padding: 4px; }
.accel input::before { content: ""; display: block; width: 15px; height: 15px; border-radius: 50%; background: #fff; }
.navbar { position: absolute; right: 24px; top: 172px; width: 35px; height: 117px; border: 2px solid #bbb; border-radius: 5px; background: rgba(248, 248, 248, .4); }
.navbar svg { width: 35px; height: 117px; margin: -2px; }
.vbar { position: relative; width: 24px; border-right: 3px solid #f6f6f6; background: #e7e7e7; display: flex; flex-direction: column; align-items: center; padding-top: 7px; }
.vbar svg { width: 14px; height: 8px; }
.thumb { margin-top: 381px; width: 10px; height: 21px; border-radius: 4px; background: #8c8c8c; }

.browser { width: 33px; flex: none; border-left: 2px solid #b5b5b5; overflow: hidden; display: flex; flex-direction: column; }
.bhead { height: 23px; flex: none; background: #d9d9d9; padding-left: 4px; line-height: 23px; font-family: "Open Sans", sans-serif; }
.bhome { width: 20px; height: 19px; margin: 4px 0 15px 7px; }
.bsearch { margin-left: 12px; width: 60px; height: 32px; border: 1px solid #ddd; padding: 7px 9px; }
.bsearch svg { width: 16px; height: 16px; }
.tree { width: 31px; height: 647px; margin-top: 5px; }

/* dialog */
.dialog {
  position: absolute;
  left: 57px;
  top: 145px;
  width: 902px;
  display: flex;
  flex-direction: column;
  padding: 0 7px 8px 6px;
  border: 1px solid #aaa;
  border-radius: 9px;
  background: #f0f0f0;
  background-image: linear-gradient(90deg, #f4f4f4, #f3f5f3 40%, #eef6ef);
  background-size: 100% 37px;
  background-repeat: no-repeat;
  box-shadow: 0 14px 36px rgba(0, 0, 0, .45), 0 2px 14px rgba(0, 0, 0, .2);
  color: #1c1c1c;
  font-size: 12px;
  line-height: 16px;
}
.dtitle { display: flex; justify-content: space-between; align-items: center; height: 36px; padding: 0 7px 0 3px; }
.dtitle h2 { margin: 0; font-size: 14px; font-weight: 400; }
.dtitle svg { width: 14px; height: 12px; }
.dtabs { display: grid; grid-template-columns: 111px 138px 168px 131px 44px; align-items: end; height: 32px; padding-left: 2px; }
.dtabs button { height: 21px; border: 1px solid #e3e3e3; border-bottom: 0; border-left: 0; background: #f4f4f4; }
.dtabs .on { height: 24px; background: #f9f9f9; padding-bottom: 2px; }
.page { border: 1px solid #e3e3e3; background: #f9f9f9; padding: 8px 16px 17px 16px; margin-right: 2px; }
.showrow { display: flex; justify-content: space-between; height: 28px; }
.showrow label { display: flex; align-items: center; gap: 3px; height: 21px; }
.showrow p { margin: 0; line-height: 18px; }
input.blue { appearance: none; margin: 0; width: 16px; height: 16px; border-radius: 3px; background: #0a5fb4; padding: 4px 3px; }
input.blue::before { content: ""; display: block; width: 10px; height: 8px; background: #fff; clip-path: polygon(0 45%, 12% 32%, 38% 65%, 88% 5%, 100% 18%, 38% 95%); }
.grid { height: 391px; border-top: 2px solid #6b6b6b; border-left: 2px solid #6b6b6b; border-right: 1px solid #ddd; border-bottom: 1px solid #ddd; background: #fff; }
table { width: 100%; table-layout: fixed; border-collapse: separate; border-spacing: 0; font: 14px/18px "Open Sans", sans-serif; }
.c1 { width: 344px; }
.c2 { width: 172px; }
.c3 { width: 172px; }
.c4 { width: 140px; }
th { height: 25px; padding: 1px 0 0 1px; font-weight: 400; background: #efefef; border-right: 1px solid #808080; border-bottom: 1px solid #808080; }
th.stub { border-right: 0; }
td { height: 22px; padding: 0; border-right: 1px solid #9b9b9b; border-bottom: 1px solid #9b9b9b; }
td.stub { border: 0; background: #fff; }
.sel td:not(.stub) { background-color: #0078d7; color: #fff; border-color: #2b659b; }
.name { display: flex; align-items: center; height: 21px; }
.name svg { width: 28px; height: 22px; }
.name label { margin-left: 10px; }
.tick { appearance: none; margin: 0; width: 13px; height: 13px; border: 1px solid #777; background: #fff; padding: 1px; flex: none; display: inline-block; vertical-align: middle; }
.tick::before { content: ""; display: block; width: 9px; height: 8px; background: #000; clip-path: polygon(0 42%, 16% 34%, 36% 58%, 90% 0, 100% 22%, 40% 100%, 28% 94%); }
.mid { text-align: center; line-height: 16px; padding-right: 2px; }
.soft { appearance: none; margin: 0; width: 15px; height: 15px; border: 1px solid #ddd; border-radius: 3px; background: #fbfbfb; vertical-align: middle; display: inline-block; }
.ov button { display: block; width: 100%; height: 19px; background: #f0f0f0; color: #1c1c1c; line-height: 17px; border: 1px solid #ccc; }
.hatch { background-image: repeating-conic-gradient(#a9a9a9 0 25%, #d8d8d8 0 50%); background-size: 2px 2px; }
.sel .hatch { background-image: repeating-conic-gradient(#7c8288 0 25%, #0f78ca 0 50%); }
.btn { height: 28px; border: 1px solid #cfcfcf; border-radius: 4px; background: #fdfdfd; }
.btn:disabled { color: #9a9a9a; border-color: #e8e8e8; background: #f5f5f5; }
.acts { display: grid; grid-template-columns: repeat(4, 103px); gap: 9px; margin-top: 10px; }
.note { display: flex; align-items: flex-start; gap: 12px; width: 446px; height: 83px; margin: 59px 0 0 3px; padding: 8px 19px 0 22px; border: 1px solid #dcdcdc; }
.note p { margin: 0; width: 265px; }
.note .btn { width: 126px; margin-top: 6px; }
.foot { display: grid; grid-template-columns: repeat(4, 86px); gap: 9px; justify-content: end; padding-top: 11px; }
.foot .btn { height: 26px; }
.foot .ok { border-color: #2f82c8; }
.grip { position: absolute; right: 0; bottom: 1px; width: 12px; height: 12px; }
.cursor { position: absolute; left: 652px; top: 885px; width: 12px; height: 19px; }
```
